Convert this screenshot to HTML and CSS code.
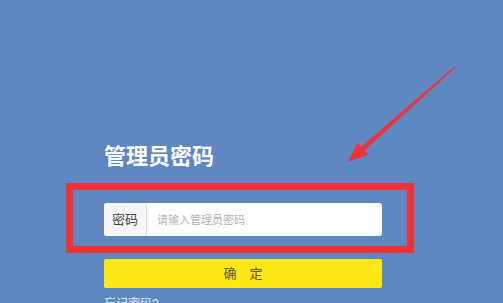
FILE: index.html
```html
<!DOCTYPE html>
<html lang="zh-CN">
<head>
	<meta charset="UTF-8">
	<title>管理员密码</title>
	<link rel="stylesheet" href="styles.css">
</head>
<body>
	<div class="main">
		<h1 class="title">管理员密码</h1>
		<!-- 红框标注 -->
		<div class="mark">
			<div class="field">
				<span class="label">密码</span>
				<input class="pwd" type="password" placeholder="请输入管理员密码">
			</div>
		</div>
		<a class="btn" href="javascript:">确&emsp;定</a>
		<a class="forget" href="javascript:">忘记密码?</a>
	</div>
	<!-- 箭头标注 -->
	<svg class="arrow" width="503" height="303" viewBox="0 0 503 303">
		<polygon fill="#ee3338" points="455.5,67.6 364.6,150.6 368.2,154.7 348,162 357.6,142.7 361.2,146.8 454.5,66.4"/>
	</svg>
</body>
</html>
```

FILE: styles.css
```css
html, body {
	margin: 0;
	padding: 0;
	background: #5f88c2;
	height: 100%;
	overflow: hidden;
}
body {
	position: relative;
	font-family: "Liberation Sans", "Noto Sans CJK SC", sans-serif;
}
.main {
	width: 348px;
	margin-left: 66px;
	padding-top: 144px;
	display: flex;
	flex-direction: column;
}
.title {
	margin: 0 0 13px 38px;
	font-size: 22px;
	line-height: 26px;
	font-weight: bold;
	color: #fff;
}
.mark {
	border: 7px solid #ee3338;
	padding: 13px 25px 10px 31px;
}
.field {
	display: flex;
	height: 33px;
	background: #fff;
	border-radius: 3px;
	overflow: hidden;
}
.label {
	width: 42px;
	border-right: 1px solid #d8dde6;
	background: #f6f7f9;
	color: #444;
	font-size: 13px;
	line-height: 33px;
	text-align: center;
}
.pwd {
	flex: 1;
	border: none;
	outline: none;
	padding: 0 10px;
	font-size: 11px;
	font-family: inherit;
	background: transparent;
}
.pwd::placeholder {
	color: #b0b4ba;
}
.btn {
	display: block;
	margin: 6px 0 0 38px;
	width: 278px;
	height: 29px;
	line-height: 29px;
	background: #fde816;
	border-radius: 2px;
	color: #5a5218;
	font-size: 13px;
	text-align: center;
	text-decoration: none;
}
.forget {
	margin: 6px 0 0 38px;
	font-size: 12px;
	color: #e8eef8;
	text-decoration: none;
}
.arrow {
	position: absolute;
	left: 0;
	top: 0;
	pointer-events: none;
}
```
